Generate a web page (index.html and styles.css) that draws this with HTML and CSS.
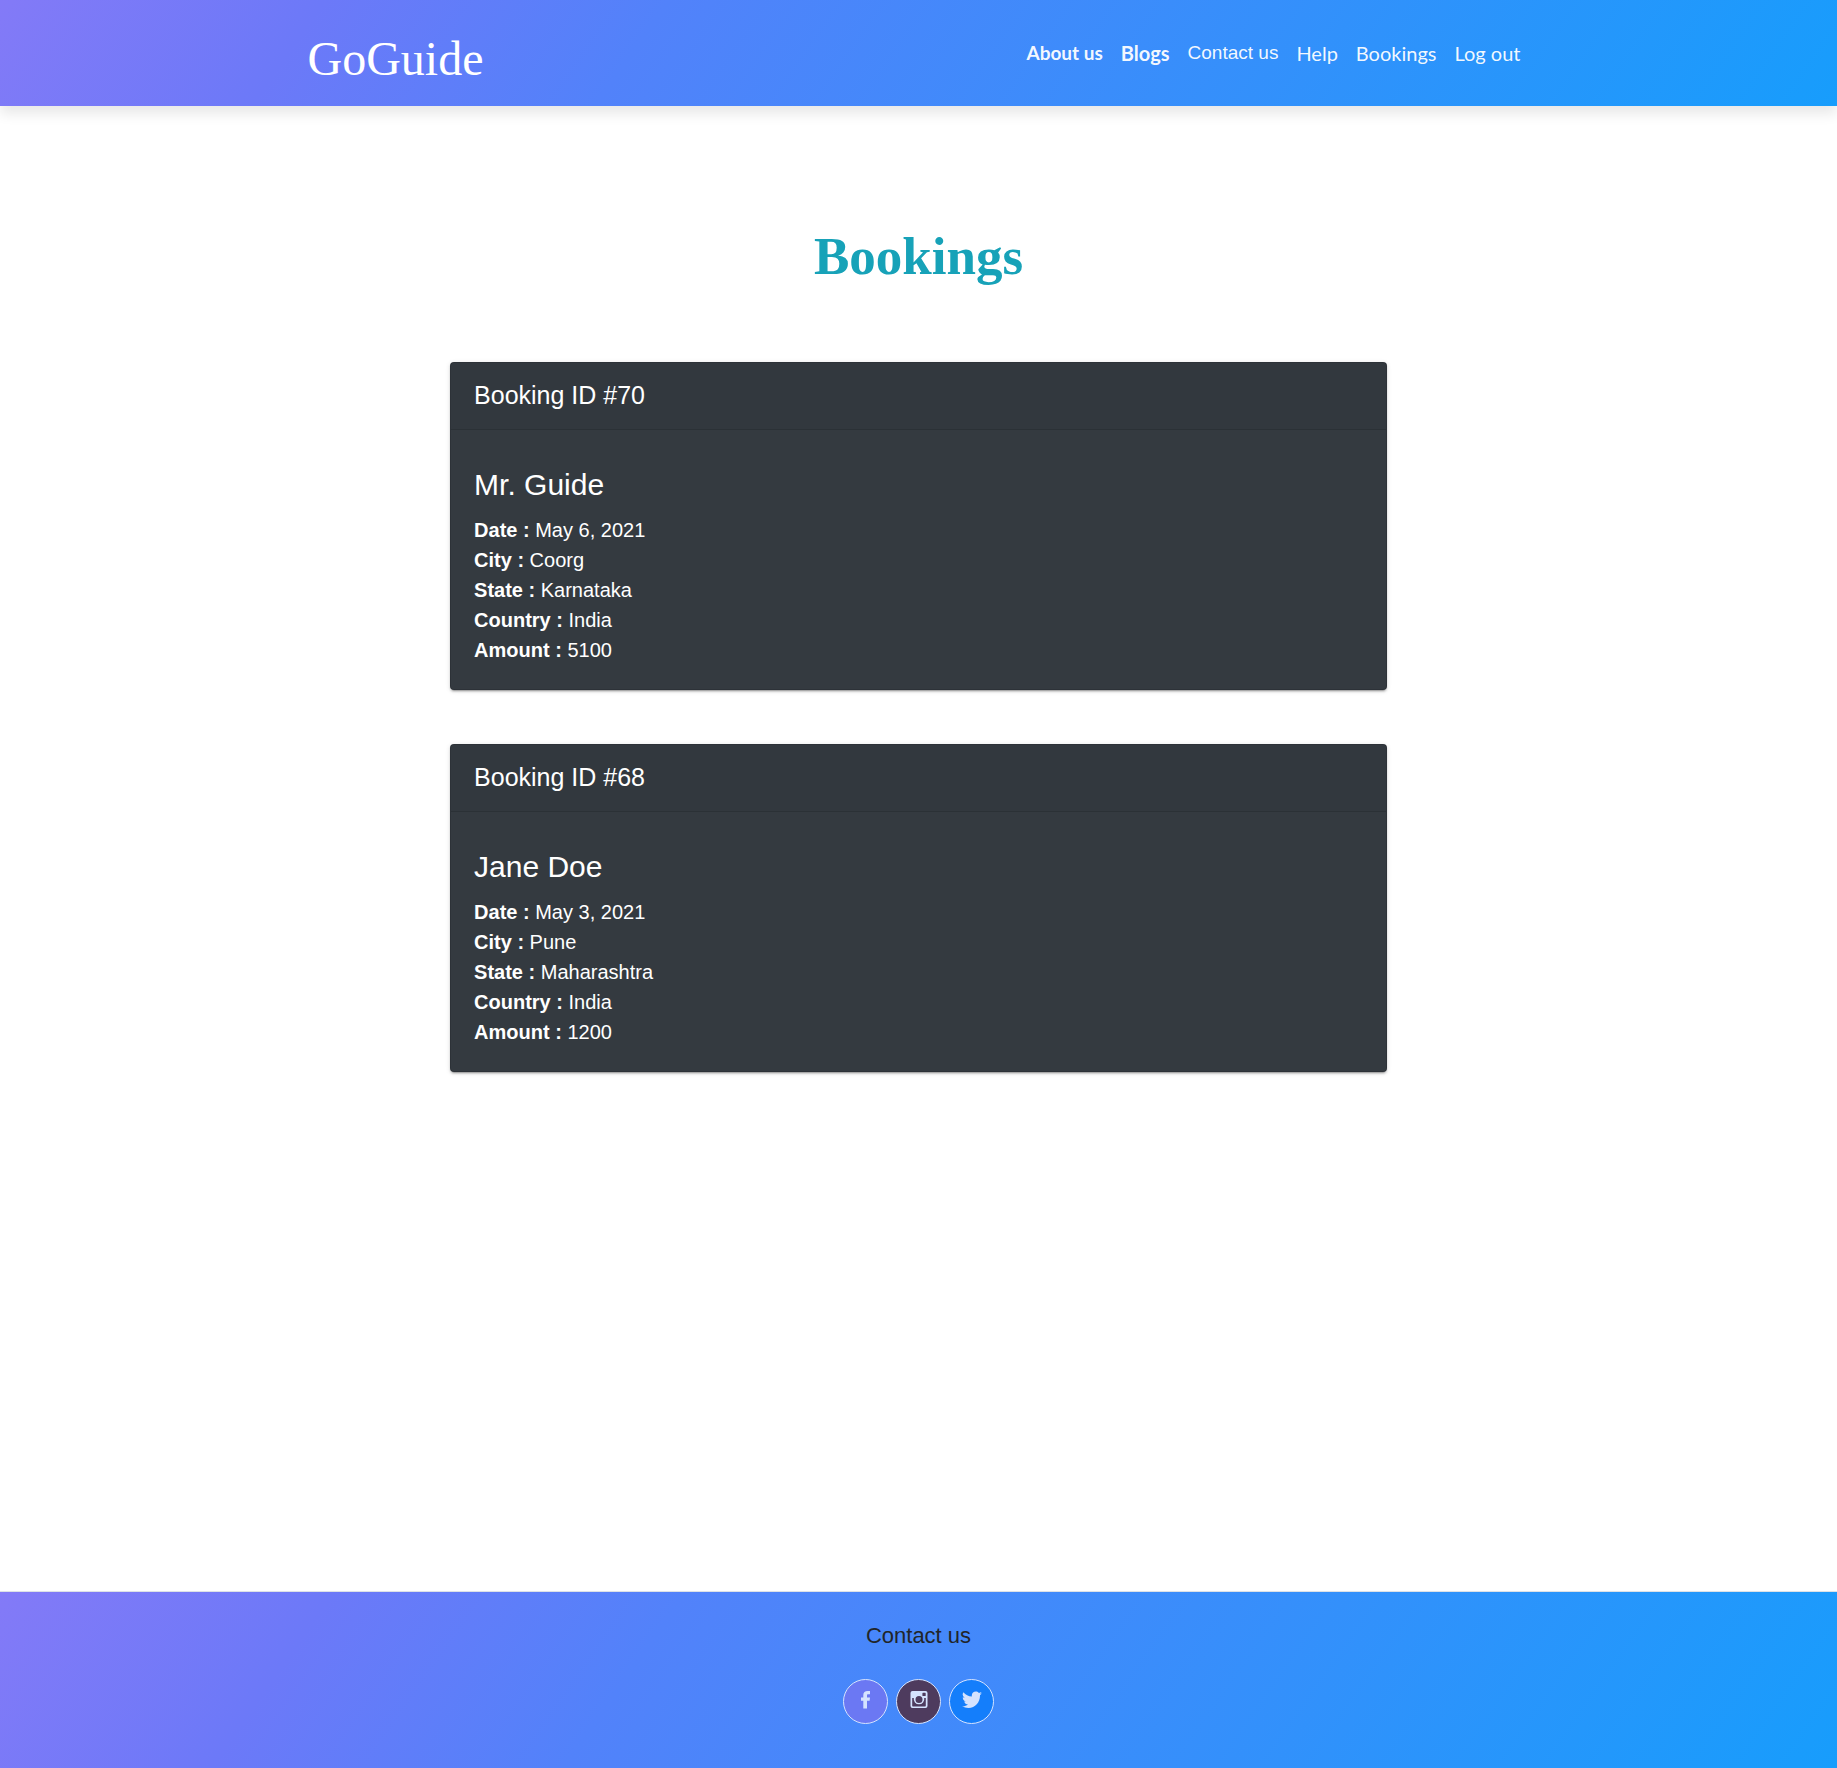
FILE: index.html
```html
<!DOCTYPE html>
<html lang="en">
<head>
<meta charset="utf-8">
<meta name="viewport" content="width=device-width, initial-scale=1">
<title>Bookings - GoGuide</title>
<link rel="stylesheet" href="styles.css">
</head>
<body>
<header class="site-header">
  <div class="header-inner">
    <a class="brand" href="#">GoGuide</a>
    <nav class="nav" aria-label="Main">
      <a class="nav-link nav-strong" href="#">About us</a>
      <a class="nav-link nav-strong nav-large" href="#">Blogs</a>
      <a class="nav-link nav-plain" href="#">Contact us</a>
      <a class="nav-link nav-large" href="#">Help</a>
      <a class="nav-link nav-large" href="#">Bookings</a>
      <a class="nav-link nav-large" href="#">Log out</a>
    </nav>
  </div>
</header>
<main class="content">
  <h1 class="page-title">Bookings</h1>
  <section class="cards">
    <article class="card">
      <h2 class="card-header">Booking ID #70</h2>
      <div class="card-body">
        <h3 class="guide">Mr. Guide</h3>
        <p class="row"><b>Date :</b> May 6, 2021</p>
        <p class="row"><b>City :</b> Coorg</p>
        <p class="row"><b>State :</b> Karnataka</p>
        <p class="row"><b>Country :</b> India</p>
        <p class="row"><b>Amount :</b> 5100</p>
      </div>
    </article>
    <article class="card">
      <h2 class="card-header">Booking ID #68</h2>
      <div class="card-body">
        <h3 class="guide">Jane Doe</h3>
        <p class="row"><b>Date :</b> May 3, 2021</p>
        <p class="row"><b>City :</b> Pune</p>
        <p class="row"><b>State :</b> Maharashtra</p>
        <p class="row"><b>Country :</b> India</p>
        <p class="row"><b>Amount :</b> 1200</p>
      </div>
    </article>
  </section>
</main>
<footer class="site-footer">
  <h2 class="footer-title">Contact us</h2>
  <div class="socials">
    <a class="social facebook" href="#" aria-label="Facebook">
      <svg class="icon" viewBox="0 0 20 20" aria-hidden="true"><path d="M14 1v3.200h-1.800c-1 0-1.200.5-1.200 1.200V7.500h3l-.4 3.200H11V18.500H7.300v-7.800H5V7.500h2.300V5.100C7.300 2.500 9 1 11.600 1z"/></svg>
    </a>
    <a class="social instagram" href="#" aria-label="Instagram">
      <svg class="icon" viewBox="0 0 20 20" aria-hidden="true"><path fill-rule="evenodd" d="M3.500 1h13A2 2 0 0 1 18.500 3v13a2 2 0 0 1-2 2h-13a2 2 0 0 1-2-2V3a2 2 0 0 1 2-2zM3.200 8v7.700c0 .4.300.7.700.7h12.200c.4 0 .7-.3.700-.7V8h-1.600a5.300 5.300 0 1 1-10.400 0zM10 6.100a3.500 3.500 0 1 0 0 7 3.500 3.500 0 0 0 0-7zM14 2.800a.6.600 0 0 0-.6.600v2c0 .4.300.6.600.6h2.100c.4 0 .6-.3.600-.6v-2a.6.600 0 0 0-.6-.6z"/></svg>
    </a>
    <a class="social twitter" href="#" aria-label="Twitter">
      <svg class="icon" viewBox="0 0 20 20" aria-hidden="true"><path d="M20 3a8 8 0 0 1-2 2.100C18.200 12 13.400 18 6.500 18c-2.400 0-4.600-.7-6.500-1.900 2.200.2 4.300-.4 6-1.700a4.100 4.100 0 0 1-3.800-2.900c.6.100 1.200.1 1.800-.1A4.100 4.100 0 0 1 .8 7.300c.6.300 1.200.5 1.900.5A4.200 4.200 0 0 1 1.400 2.200a11.600 11.600 0 0 0 8.500 4.300C9 2.200 14 0 16.900 2.900c.9-.2 1.800-.5 2.600-1-.3 1-.9 1.700-1.800 2.200.8-.1 1.600-.3 2.300-.6z"/></svg>
    </a>
  </div>
</footer>
</body>
</html>
```

FILE: styles.css
```css
* { box-sizing: border-box; }

body {
  display: flex;
  flex-direction: column;
  min-height: 100vh;
  margin: 0;
  background: #fff;
  color: #212529;
  font-family: "Liberation Sans", Arial, sans-serif;
  font-size: 20px;
  line-height: 30px;
}

h1, h2, h3, p { margin: 0; font-weight: 400; }
a { text-decoration: none; }

.site-header,
.site-footer {
  background: linear-gradient(125deg, #837af7 0%, #6c79f8 17%, #5282fa 35%, #179dfc 100%);
}

.site-header {
  padding: 30px 16px 18px;
  box-shadow: 0 8px 12px rgba(0, 0, 0, .09);
}

.header-inner {
  display: flex;
  align-items: center;
  justify-content: space-between;
  max-width: 1222px;
  margin: 0 auto;
}

.brand {
  color: #fff;
  font: 48px/58px "Liberation Serif", "Times New Roman", serif;
}

.nav {
  display: flex;
  align-items: center;
  gap: 18px;
  margin-bottom: 12px;
  padding-right: 9px;
}

.nav-link {
  color: rgba(255, 255, 255, .95);
  font: 19px/30px Lato, sans-serif;
}
.nav-large { font-size: 20px; }
.nav-strong { font-weight: 700; }
.nav-plain { font-family: "Liberation Sans", Arial, sans-serif; }

.content { flex: 1; padding: 118px 0; }

.page-title {
  color: #17a2b8;
  font: 700 53px/64px "Liberation Serif", "Times New Roman", serif;
  text-align: center;
}

.cards {
  display: grid;
  gap: 54px;
  width: 51%;
  margin: 74px auto 0;
}

.card {
  background: #343a40;
  border: 1px solid rgba(0, 0, 0, .12);
  border-radius: 4px;
  box-shadow: 0 2px 2px rgba(0, 0, 0, .14), 0 3px 1px -2px rgba(0, 0, 0, .2), 0 1px 5px rgba(0, 0, 0, .12);
  color: #fff;
}

.card-header {
  padding: 14px 23px 16px;
  background: rgba(0, 0, 0, .03);
  border-bottom: 1px solid rgba(0, 0, 0, .12);
  font-size: 25px;
  line-height: 36px;
}

.card-body { padding: 35px 23px 24px; }

.guide {
  margin-bottom: 11px;
  font-size: 30px;
  line-height: 39px;
}

.site-footer {
  padding: 28px 16px 44px;
  border-top: 1px solid #dee2e6;
  text-align: center;
}

.footer-title {
  font-size: 22px;
  line-height: 32px;
}

.socials {
  display: flex;
  justify-content: center;
  gap: 8px;
  margin-top: 27px;
}

.social {
  display: flex;
  align-items: center;
  justify-content: center;
  width: 45px;
  height: 45px;
  padding-bottom: 4px;
  border: 1px solid #d5e3fe;
  border-radius: 50%;
}
.facebook { background: #6b78f3; }
.instagram { background: #4e3b5e; }
.twitter { background: #147efb; }

.icon {
  width: 20px;
  height: 20px;
  fill: #d5e3fe;
}
```
